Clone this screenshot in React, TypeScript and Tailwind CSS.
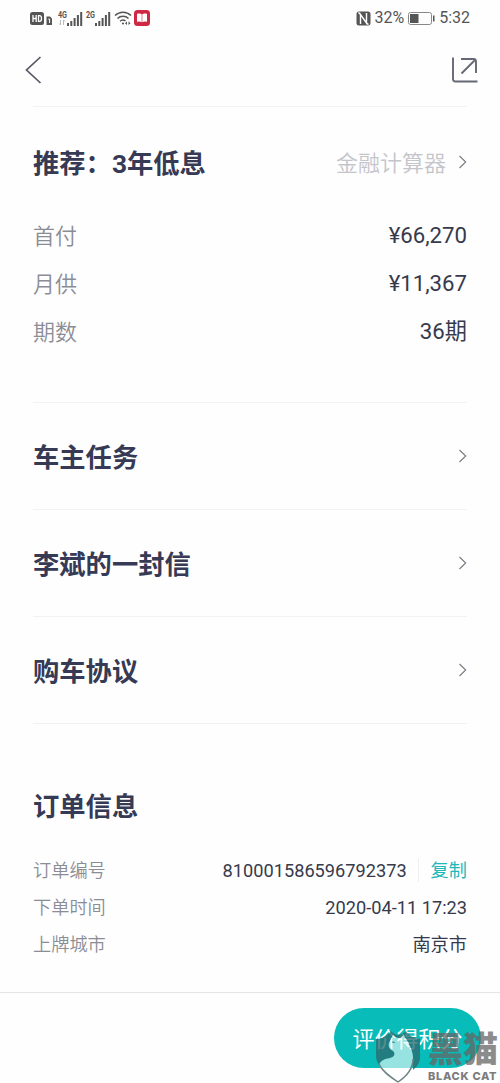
import type { ReactNode } from "react";

function Signal({ label, sub }: { label: string; sub?: boolean }) {
  return (
    <svg width="25" height="17" viewBox="0 0 25 17" fill="#555">
      <text x="0" y="8" fontSize="9" fontWeight="700" textLength="9" lengthAdjust="spacingAndGlyphs">
        {label}
      </text>
      {sub && (
        <path d="M2.500 10v5M1 13.500l1.500 1.500M5.500 15v-5M7 11.500l-1.500-1.500" stroke="#bbb" strokeWidth="1" fill="none" />
      )}
      <path d="M9 13h2v3H9zM12.300 11h2v5h-2zM15.600 8h2v8h-2zM18.900 5h2v11h-2zM22.200 2h2v14h-2z" />
    </svg>
  );
}

function StatusBar() {
  return (
    <div className="flex h-9 items-center justify-between px-[30px] text-[#555]">
      <div className="flex items-center">
        <svg width="23" height="15" viewBox="0 0 23 15">
          <rect x="0" y="1" width="14" height="13" rx="2.500" fill="#555" />
          <path d="M3 4v7M6.200 4v7M3 7.500h3.200M8.500 4.600v5.800h1c1.400 0 2-1 2-2.900s-.6-2.900-2-2.900z" stroke="#fff" strokeWidth="1.300" fill="none" />
          <path d="M16.500 5.500h3.500l2 2V14h-5.500z" fill="#555" />
          <path d="M18.300 8h1.300v4" stroke="#fff" strokeWidth="1" fill="none" />
        </svg>
        <div className="ml-[5px] flex gap-[3px]">
          <Signal label="4G" sub />
          <Signal label="2G" />
        </div>
        <svg className="ml-[3px]" width="18" height="16" viewBox="0 0 18 16" fill="none" stroke="#555" strokeWidth="1.500">
          <path d="M1 5.500c4.500-4.500 11.500-4.500 16 0M3.500 8.500c3-3 8-3 11 0M6 11.300c1.800-1.600 4-1.600 5.500-.3" />
          <circle cx="9" cy="13.500" r="1.100" fill="#555" stroke="none" />
          <path d="M13 11.500l-2 1.700 2 1.700zM14.500 11.500l2 1.700-2 1.700z" fill="#555" stroke="none" />
        </svg>
        <svg className="ml-[2px]" width="16" height="16" viewBox="0 0 16 16">
          <rect width="16" height="16" rx="3.500" fill="#cf2844" />
          <path d="M3 4c2-.7 3.700-.5 4.700.3v8c-1.300-.8-3-.9-4.700-.4zM13 4c-2-.7-3.700-.5-4.700.3v8c1.300-.8 3-.9 4.700-.4z" fill="#fff" />
        </svg>
      </div>
      <div className="flex items-center text-base leading-4">
        <svg width="15" height="15" viewBox="0 0 15 15">
          <rect x="0.500" y="0.500" width="14" height="14" rx="2.500" fill="#555" />
          <path d="M4.500 13V3.500l6 8.500V2M4.500 3.500L2.500 1.500M10.500 12l2 1.500" stroke="#fff" strokeWidth="1.400" fill="none" />
        </svg>
        <span className="ml-[3px]">32%</span>
        <svg className="ml-[4px]" width="27" height="13" viewBox="0 0 27 13">
          <rect x="0.500" y="0.500" width="23" height="12" rx="2" fill="none" stroke="#888" />
          <path d="M2 2h8.500v9H2zM25 3.500h1.500v6H25z" fill="#555" />
        </svg>
        <span className="ml-[4px]">5:32</span>
      </div>
    </div>
  );
}

function Chevron() {
  return (
    <svg width="9" height="14" viewBox="0 0 9 14" fill="none" stroke="#777983" strokeWidth="1.100">
      <path d="M1.500 1l6.200 6-6.200 6" />
    </svg>
  );
}

function Title({ children }: { children: ReactNode }) {
  return <h2 className="pt-[3px] text-[26.3px] font-bold leading-[30px] text-[#363a54]">{children}</h2>;
}

function LinkRow({ title }: { title: string }) {
  return (
    <div className="flex h-[107px] items-center justify-between border-b border-[#f2f2f4]">
      <Title>{title}</Title>
      <Chevron />
    </div>
  );
}

function PriceRow({ label, value }: { label: string; value: string }) {
  return (
    <div className="flex h-12 items-center justify-between text-[22px]">
      <span className="font-[350] text-[#8b8d96]">{label}</span>
      <span className="text-[22.200px] text-[#363a4c]">{value}</span>
    </div>
  );
}

function OrderRow({ label, children }: { label: string; children: ReactNode }) {
  return (
    <div className="flex h-[37px] items-center justify-between text-[18.2px]">
      <span className="font-[350] text-[#8b8d96]">{label}</span>
      <div className="flex items-center text-[#363a4c]">{children}</div>
    </div>
  );
}

function Watermark() {
  return (
    <div className="absolute left-[374px] top-[1030px] flex h-[53px] w-[126px]">
      <svg width="48" height="53" viewBox="0 0 48 53">
        <path
          d="M2 9c6 0 10-2 15-8 2 2 4 4 7 4s6-2 8-4c2 4 7 7 14 8v18c0 5-2 9-7 13V28c0-5-2-10-4-14-2-5-4-5-5-9l-3 3c-2 0-4 0-6-1l-2-2c-1 3-3 5-4 8-1 4 1 6 4 8 3 3 1 6-3 7-5 1-9 2-11 7-2-3-3-6-3-9z"
          fill="#2b6c70"
          opacity=".78"
        />
        <path
          d="M19 5l2 2c2 1 4 1 6 1l3-3c1 4 3 4 5 9 2 4 4 9 4 14 0 9-6 17-15 24C15 46 8 41 5 35c2-5 6-6 11-7 4-1 6-4 3-7-3-2-5-4-4-8 1-3 3-5 4-8z"
          fill="#fff"
          opacity=".58"
        />
        <path d="M5 34c3 7 10 12 19 18 9-6 15-13 15-23" fill="none" stroke="#6d8486" strokeWidth="1.500" />
        <path d="M18 12l3 .5" stroke="#3b8588" strokeWidth="1" />
      </svg>
      <div className="ml-[6px] flex w-[72px] flex-col pt-[2px] text-[#666]">
        <span className="h-[38px] whitespace-nowrap text-[35px] font-black leading-[37px] opacity-75">黑猫</span>
        <span className="whitespace-nowrap font-[Inter] text-[11px] font-extrabold leading-[13px] tracking-[0.7px] opacity-85">
          BLACK CAT
        </span>
      </div>
    </div>
  );
}

export default function App() {
  return (
    <div className='relative flex h-[1083px] w-[500px] flex-col overflow-hidden bg-[#fefefe] font-[Roboto,"Noto_Sans_CJK_SC",sans-serif]'>
      <StatusBar />
      <header className="flex h-[70px] items-center justify-between pb-[3px] pl-[25px] pr-[21px]">
        <svg width="18" height="28" viewBox="0 0 18 28" fill="none" stroke="#555864" strokeWidth="1.700">
          <path d="M15.500 1L1.500 14l14 13" />
        </svg>
        <svg width="28" height="26" viewBox="0 0 28 26" fill="none" stroke="#666975" strokeWidth="1.900">
          <path d="M2 0.500v21.500q0 2.500 2.500 2.500H26.500M10 2h12.500q2.500 0 2.500 2.500V16M10.500 16.500L24 3" />
        </svg>
      </header>

      <main className="flex h-[886px] flex-col px-[33px]">
        <section className="h-[297px] border-y border-[#f2f2f4] pt-[40px]">
          <div className="flex h-[30px] items-center justify-between">
            <Title>推荐：3年低息</Title>
            <div className="flex items-center gap-[12px] text-[22px] font-[350] leading-[30px] text-[#c4c5cb]">
              <span className="pt-[3px]">金融计算器</span>
              <Chevron />
            </div>
          </div>
          <div className="mt-[35px]">
            <PriceRow label="首付" value="¥66,270" />
            <PriceRow label="月供" value="¥11,367" />
            <PriceRow label="期数" value="36期" />
          </div>
        </section>
        <LinkRow title="车主任务" />
        <LinkRow title="李斌的一封信" />
        <LinkRow title="购车协议" />
        <section className="pt-[65px]">
          <Title>订单信息</Title>
          <div className="mt-[30px]">
            <OrderRow label="订单编号">
              810001586596792373
              <span className="ml-[11px] mr-[12px] h-6 w-px bg-[#f0f0f2]" />
              <span className="text-[#1fb8b8]">复制</span>
            </OrderRow>
            <OrderRow label="下单时间">2020-04-11 17:23</OrderRow>
            <OrderRow label="上牌城市">南京市</OrderRow>
          </div>
        </section>
      </main>

      <footer className="flex h-[91px] justify-end border-t border-[#e4e4e6] pr-[19px] pt-[15px]">
        <button className="h-[60px] w-[147px] rounded-full bg-[#07bcb9] pt-[2px] text-[22px] text-white">
          评价得积分
        </button>
      </footer>
      <Watermark />
    </div>
  );
}
